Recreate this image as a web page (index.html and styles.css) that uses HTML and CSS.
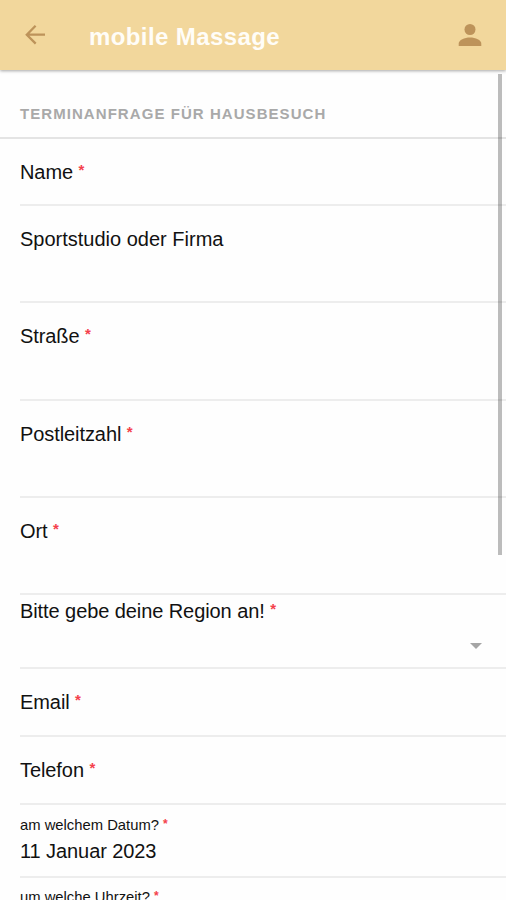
FILE: index.html
```html
<!DOCTYPE html>
<html lang="de">
<head>
<meta charset="utf-8">
<title>mobile Massage</title>
<link rel="stylesheet" href="styles.css">
</head>
<body>
<header class="toolbar">
  <svg class="back" width="22" height="22" viewBox="0 0 22 22"><path d="M10.600 1.800 1.800 10.700l8.900 8.900M1.800 10.700H20" fill="none" stroke="#bd935a" stroke-width="2.300"/></svg>
  <h1 class="title">mobile Massage</h1>
  <svg class="user" width="24" height="24" viewBox="0 0 24 24" fill="#bd935a"><circle cx="12" cy="6.500" r="5.500"/><path d="M.7 23v-2.300C.7 17 6.500 14.500 12 14.500S23.300 17 23.300 20.700V23z"/></svg>
</header>
<main class="form">
  <h2 class="section"><span class="section-text">Terminanfrage für Hausbesuch</span></h2>
  <div class="field"><label>Name <span class="req">*</span></label></div>
  <div class="field tall wide"><label>Sportstudio oder Firma</label></div>
  <div class="field tall street"><label>Straße <span class="req">*</span></label></div>
  <div class="field tall"><label>Postleitzahl <span class="req">*</span></label></div>
  <div class="field tall"><label>Ort <span class="req">*</span></label></div>
  <div class="field select"><label>Bitte gebe deine Region an! <span class="req">*</span></label><i class="caret"></i></div>
  <div class="field contact"><label>Email <span class="req">*</span></label></div>
  <div class="field contact"><label>Telefon <span class="req">*</span></label></div>
  <div class="field date"><label class="small">am welchem Datum? <span class="req">*</span></label><span class="value">11 Januar 2023</span></div>
  <div class="field time"><label class="small">um welche Uhrzeit? <span class="req">*</span></label></div>
</main>
<div class="scrollbar"></div>
</body>
</html>
```
FILE: styles.css
```css
* {
  box-sizing: border-box;
}

body {
  margin: 0;
  height: 900px;
  overflow: hidden;
  position: relative;
  background: #fefefe;
  color: #111;
  font-family: "Liberation Sans", Arial, sans-serif;
}

.toolbar {
  position: relative;
  display: flex;
  align-items: center;
  height: 70px;
  padding: 0 24px 0 25px;
  background: #f2d79c;
  box-shadow: 0 1px 3px rgba(0, 0, 0, .35);
}

.title {
  flex: 1;
  margin: 3px 0 0 42px;
  color: #fffdf8;
  font-size: 24px;
  line-height: 28px;
  letter-spacing: .4px;
}

.section {
  display: flex;
  height: 69px;
  margin: 0;
  padding: 34px 20px 0;
  border-bottom: 2px solid #e4e4e4;
  color: #a9a9a9;
  font-size: 15px;
  line-height: 19px;
  letter-spacing: 1.06px;
  text-transform: uppercase;
}

.field {
  display: flex;
  flex-direction: column;
  height: 67px;
  margin-left: 20px;
  padding-top: 21px;
  border-bottom: 2px solid #ededed;
  font-size: 20px;
  line-height: 24px;
  letter-spacing: -.08px;
}

.wide {
  letter-spacing: 0;
}

.tall {
  height: 97px;
}

.street {
  height: 98px;
}

.select {
  height: 74px;
  padding-top: 4px;
}

.contact {
  height: 68px;
}

.req {
  color: #f4414c;
  font-size: 15px;
  font-weight: bold;
  line-height: 1;
  vertical-align: 4px;
}

.caret {
  align-self: flex-end;
  margin: 20px 24px 0 0;
  border: 6px solid transparent;
  border-top-color: #a5a5a5;
  border-bottom: 0;
}

.date {
  height: 73px;
  padding-top: 9px;
}

.time {
  height: 24px;
  padding-top: 8px;
  border-bottom: 0;
}

.small {
  font-size: 14.8px;
  line-height: 22px;
  letter-spacing: 0;
}

.small .req {
  font-size: 12px;
  vertical-align: 2px;
}

.value {
  margin-top: 3px;
}

.scrollbar {
  position: absolute;
  top: 74px;
  right: 4px;
  width: 4px;
  height: 481px;
  background: rgba(0, 0, 0, .26);
}
```
